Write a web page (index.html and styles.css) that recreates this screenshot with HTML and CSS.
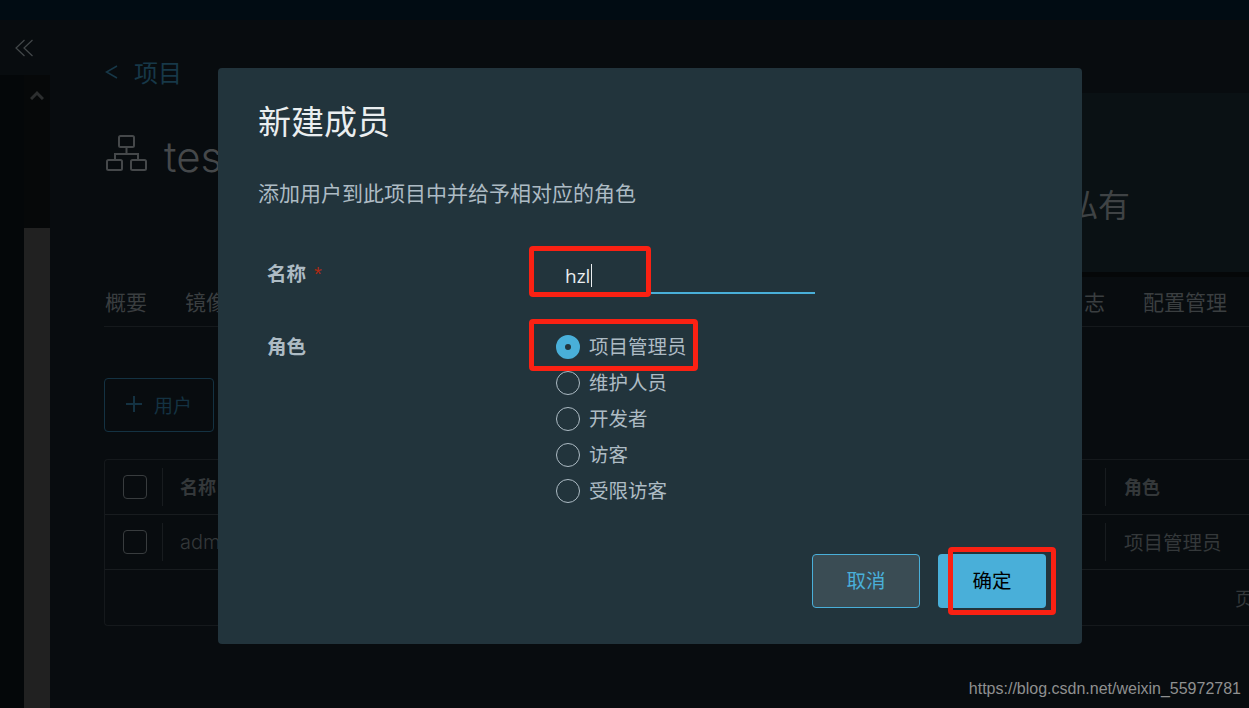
FILE: index.html
```html
<!DOCTYPE html>
<html lang="zh-CN">
<head>
    <meta charset="UTF-8">
    <meta name="viewport" content="width=device-width, initial-scale=1.0">
    <title>新建成员</title>
    <link rel="stylesheet" href="styles.css">
</head>
<body>
    <div class="topbar"></div>

    <div class="layout">
        <aside class="sidebar">
            <div class="collapse">
                <svg width="18" height="18" viewBox="0 0 18 18" fill="none" stroke="#43484a" stroke-width="1.2">
                    <path d="M9.5 1L1 9l8.500 8"/>
                    <path d="M17.500 1L9 9l8.500 8"/>
                </svg>
            </div>
            <div class="side-body">
                <div class="side-nav"></div>
                <div class="scrollbar">
                    <div class="scroll-track">
                        <svg width="14" height="10" viewBox="0 0 14 10" fill="none" stroke="#2c2e2f" stroke-width="3">
                            <path d="M1 9l6-6 6 6"/>
                        </svg>
                    </div>
                    <div class="scroll-thumb"></div>
                </div>
            </div>
        </aside>

        <main class="main">
            <div class="breadcrumb">
                <svg class="back" width="13" height="14" viewBox="0 0 13 14" fill="none" stroke="#173848" stroke-width="1.500">
                    <path d="M12 1L1.500 7 12 13"/>
                </svg>
                <span>项目</span>
            </div>

            <div class="overview">
                <div class="project-title">
                    <svg width="42" height="40" viewBox="0 0 42 40" fill="none" stroke="#45484a" stroke-width="2">
                        <rect x="13" y="2" width="15" height="11" rx="1.500"/>
                        <path d="M20.500 13v7M9 26v-6h23v6"/>
                        <rect x="1" y="26" width="15" height="10" rx="1.500"/>
                        <rect x="25" y="26" width="15" height="10" rx="1.500"/>
                    </svg>
                    <span>test</span>
                </div>
                <div class="access-card">私有</div>
            </div>

            <nav class="tabs">
                <span>概要</span>
                <span>镜像仓库</span>
                <span class="tabs-end">日志</span>
                <span>配置管理</span>
            </nav>

            <button class="add-user">
                <svg width="18" height="18" viewBox="0 0 18 18" fill="none" stroke="#143242" stroke-width="2">
                    <path d="M9 1v16M1 9h16"/>
                </svg>
                <span>用户</span>
            </button>

            <div class="table">
                <div class="table-row table-head">
                    <div class="cell-check"><span class="checkbox"></span></div>
                    <div class="cell-name">名称</div>
                    <div class="cell-role">角色</div>
                </div>
                <div class="table-row">
                    <div class="cell-check"><span class="checkbox"></span></div>
                    <div class="cell-name cell-admin">admin</div>
                    <div class="cell-role">项目管理员</div>
                </div>
                <div class="table-foot"><span>页</span></div>
            </div>
        </main>
    </div>

    <section class="modal">
        <h2 class="modal-title">新建成员</h2>
        <p class="modal-desc">添加用户到此项目中并给予相对应的角色</p>

        <div class="form-row name-row">
            <label class="form-label">名称<span class="required">*</span></label>
            <div class="text-input"><span>hzl</span><i class="caret"></i></div>
        </div>

        <div class="form-row role-row">
            <label class="form-label role-label">角色</label>
            <div class="radio-list">
                <div class="radio radio-checked"><span class="radio-dot"></span><span class="radio-text">项目管理员</span></div>
                <div class="radio"><span class="radio-dot"></span><span class="radio-text">维护人员</span></div>
                <div class="radio"><span class="radio-dot"></span><span class="radio-text">开发者</span></div>
                <div class="radio"><span class="radio-dot"></span><span class="radio-text">访客</span></div>
                <div class="radio"><span class="radio-dot"></span><span class="radio-text">受限访客</span></div>
            </div>
        </div>

        <div class="modal-actions">
            <button class="btn btn-cancel">取消</button>
            <button class="btn btn-ok">确定</button>
        </div>

        <div class="mark mark-input"></div>
        <div class="mark mark-radio"></div>
        <div class="mark mark-ok"></div>
    </section>

    <div class="watermark">https://blog.csdn.net/weixin_55972781</div>
</body>
</html>
```

FILE: styles.css
```css
* {
    box-sizing: border-box;
}
html, body {
    height: 100%;
}
body {
    margin: 0;
    position: relative;
    display: flex;
    flex-direction: column;
    overflow: hidden;
    background-color: #080c0f;
    font-family: "Noto Sans CJK SC", "Liberation Sans", sans-serif;
}
.topbar {
    height: 20px;
    flex: none;
    background-color: #010c13;
}
.layout {
    flex: 1;
    display: flex;
    min-height: 0;
}

/* sidebar */
.sidebar {
    width: 50px;
    flex: none;
    display: flex;
    flex-direction: column;
}
.collapse {
    height: 55px;
    padding: 18px 0 0 15px;
}
.side-body {
    flex: 1;
    display: flex;
}
.side-nav {
    width: 24px;
    background-color: #040709;
}
.scrollbar {
    width: 26px;
    display: flex;
    flex-direction: column;
}
.scroll-track {
    height: 153px;
    padding: 6px 0 0 6px;
    background-color: #060809;
}
.scroll-thumb {
    flex: 1;
    background-color: #212121;
}

/* page behind the modal */
.main {
    flex: 1;
    min-width: 0;
    padding: 38px 0 0 54px;
}
.breadcrumb {
    height: 30px;
    display: flex;
    align-items: center;
    gap: 16px;
    padding-bottom: 2px;
    font-size: 24px;
    line-height: 28px;
    color: #173848;
}
.back {
    margin-left: 1px;
}
.overview {
    margin-top: 5px;
    height: 179px;
    display: flex;
    justify-content: space-between;
}
.project-title {
    display: flex;
    align-items: flex-start;
    gap: 16px;
    padding: 41px 0 0 2px;
    font-family: Inter, sans-serif;
    font-weight: 300;
    font-size: 42px;
    line-height: 46px;
    color: #45484a;
}
.access-card {
    width: 400px;
    padding: 86px 119px 0 0;
    text-align: right;
    font-size: 32px;
    line-height: 48px;
    color: #3f4345;
    background-color: #0a1114;
    box-shadow: 0 5px 0 #050708;
}
.tabs {
    height: 55px;
    display: flex;
    align-items: flex-end;
    gap: 38px;
    padding: 0 22px 13px 1px;
    font-size: 21px;
    line-height: 24px;
    color: #3a3e40;
    border-bottom: 1px solid #15191c;
}
.tabs-end {
    margin-left: auto;
}
.add-user {
    display: flex;
    align-items: center;
    gap: 11px;
    width: 110px;
    height: 54px;
    margin-top: 51px;
    padding: 0 0 2px 20px;
    font-family: inherit;
    font-size: 19px;
    color: #143242;
    background: none;
    border: 1px solid #143242;
    border-radius: 4px;
}
.table {
    margin-top: 27px;
    height: 167px;
    border: 1px solid #15191c;
    border-right: none;
    border-radius: 4px 0 0 4px;
}
.table-row {
    height: 55px;
    display: grid;
    grid-template-columns: 58px 1fr 144px;
    align-items: center;
    border-bottom: 1px solid #181c1f;
    color: #34383a;
    font-size: 19.500px;
}
.table-head {
    font-size: 18px;
    font-weight: 700;
}
.cell-check {
    height: 38px;
    display: flex;
    align-items: center;
    padding-left: 18px;
    border-right: 1px solid #181c1f;
}
.checkbox {
    width: 24px;
    height: 24px;
    border: 1px solid #383c3e;
    border-radius: 4px;
}
.cell-name {
    padding-left: 17px;
}
.table-head .cell-name {
    padding-bottom: 2px;
}
.cell-admin {
    font-family: Inter, sans-serif;
    font-weight: 300;
    font-size: 20px;
}
.cell-role {
    height: 38px;
    line-height: 38px;
    padding-left: 18px;
    border-left: 1px solid #181c1f;
}
.table-head .cell-role {
    line-height: 36px;
}
.table-foot {
    height: 55px;
    display: flex;
    justify-content: flex-end;
    align-items: center;
    margin-right: -5px;
    font-size: 19px;
    color: #34383a;
}

/* modal */
.modal {
    position: absolute;
    left: 218px;
    top: 68px;
    width: 864px;
    height: 576px;
    padding: 32px 36px 0 40px;
    background-color: #22343c;
    border-radius: 4px;
}
.modal-title {
    margin: 0;
    font-size: 33px;
    font-weight: 400;
    line-height: 40px;
    color: #eaeef0;
}
.modal-desc {
    margin: 38px 0 0;
    font-size: 21px;
    line-height: 28px;
    color: #adbbc4;
}
.form-row {
    display: grid;
    grid-template-columns: 268px 1fr;
    padding-left: 9px;
}
.name-row {
    margin-top: 49px;
    height: 39px;
}
.form-label {
    font-size: 19.500px;
    font-weight: 700;
    line-height: 36px;
    color: #adbbc4;
}
.required {
    margin-left: 8px;
    font-family: "Liberation Sans", sans-serif;
    font-size: 20px;
    font-weight: 400;
    color: #b02a13;
}
/* the underline only shows to the right of the red box */
.text-input {
    width: 280px;
    height: 39px;
    display: flex;
    align-items: center;
    padding: 2px 0 0 30px;
    font-family: "Open Sans", sans-serif;
    font-size: 19px;
    color: #eaeef0;
    background: linear-gradient(#49afd9, #49afd9) right bottom / 164px 2px no-repeat;
}
.caret {
    width: 1px;
    height: 23px;
    margin-left: 1px;
    background-color: #eaeef0;
}
.role-row {
    margin-top: 35px;
}
.role-label {
    line-height: 33px;
}
.radio-list {
    padding-left: 21px;
}
.radio {
    height: 36px;
    display: flex;
    align-items: center;
    gap: 9px;
    font-size: 19.500px;
    color: #adbbc4;
}
.radio-text {
    margin-bottom: 4px;
}
.radio-dot {
    width: 24px;
    height: 24px;
    border: 1px solid #adbbc4;
    border-radius: 50%;
}
.radio-checked .radio-dot {
    border: 9px solid #49afd9;
    background-color: #22343c;
}
.modal-actions {
    margin-top: 45px;
    display: flex;
    justify-content: flex-end;
    gap: 18px;
}
.btn {
    width: 108px;
    height: 54px;
    padding: 0 0 3px;
    font-family: inherit;
    font-size: 19.500px;
    border-radius: 4px;
}
.btn-cancel {
    color: #49afd9;
    background-color: #3a4c54;
    border: 1px solid #49afd9;
}
.btn-ok {
    color: #000;
    background-color: #49afd9;
    border: none;
}

/* red annotation boxes drawn on the screenshot */
.mark {
    position: absolute;
    border: 5px solid #fa2113;
    border-radius: 4px;
}
.mark-input {
    left: 311px;
    top: 178px;
    width: 122px;
    height: 51px;
}
.mark-radio {
    left: 311px;
    top: 251px;
    width: 169px;
    height: 52px;
}
.mark-ok {
    left: 730px;
    top: 479px;
    width: 108px;
    height: 68px;
}
.watermark {
    position: absolute;
    right: 8px;
    bottom: 9px;
    font-family: "Liberation Sans", sans-serif;
    font-size: 16px;
    line-height: 20px;
    color: #8f9090;
}
```
